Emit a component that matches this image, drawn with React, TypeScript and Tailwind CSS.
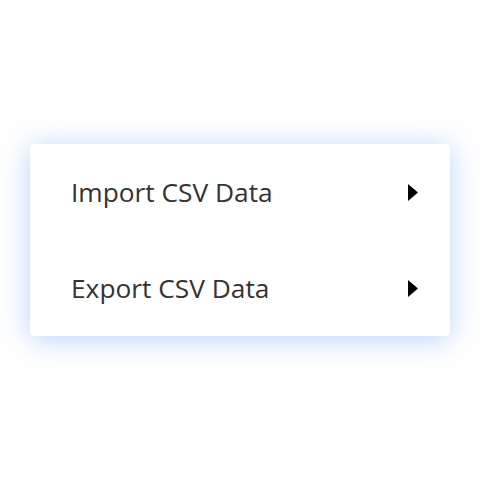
import React from "react";

function Arrow() {
  return (
    <svg width="10" height="17" viewBox="0 0 10 17" className="block">
      <path d="M0 0 L10 8.5 L0 17 Z" fill="#000" />
    </svg>
  );
}

const items = ["Import CSV Data", "Export CSV Data"];

export default function App() {
  return (
    <div className="w-[480px] h-[480px] bg-white pt-[144px] px-[30px]">
      <div className="bg-white rounded-[4px] shadow-[0_3px_28px_rgba(110,170,250,0.5)]">
        {items.map((t) => (
          <div
            key={t}
            className="flex items-center justify-between h-[96px] pl-[41px] pr-[32px]"
          >
            <span
              className="text-[26.3px] text-[#333333] leading-none"
              style={{ fontFamily: '"Open Sans", sans-serif' }}
            >
              {t}
            </span>
            <Arrow />
          </div>
        ))}
      </div>
    </div>
  );
}
